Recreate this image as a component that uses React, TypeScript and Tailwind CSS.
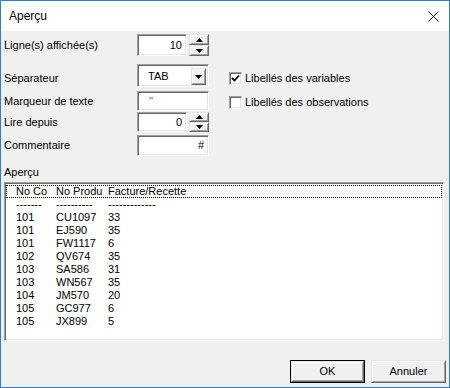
const sunken =
  "bg-white border border-t-[#a0a0a0] border-l-[#a0a0a0] border-r-white border-b-white shadow-[inset_1px_1px_0_#696969,inset_-1px_-1px_0_#e3e3e3]";
const raised =
  "bg-[#f0f0f0] border border-t-[#e3e3e3] border-l-[#e3e3e3] border-r-[#696969] border-b-[#696969] shadow-[inset_1px_1px_0_#ffffff,inset_-1px_-1px_0_#a0a0a0]";

function Arrow({ up }: { up?: boolean }) {
  return (
    <svg width="7" height="4" viewBox="0 0 7 4">
      {up ? <path d="M0 4 L3.5 0 L7 4 Z" fill="#000" /> : <path d="M0 0 L7 0 L3.5 4 Z" fill="#000" />}
    </svg>
  );
}

function Spin({ value, h }: { value: string; h: string }) {
  return (
    <div className={`flex gap-[2px] ${h}`}>
      <div className={`${sunken} w-[50px] h-full flex items-center justify-end pr-[4px]`}>{value}</div>
      <div className="w-[20px] h-full flex flex-col">
        <div className={`${raised} flex-1 flex items-center justify-center`}>
          <Arrow up />
        </div>
        <div className={`${raised} flex-1 flex items-center justify-center`}>
          <Arrow />
        </div>
      </div>
    </div>
  );
}

function Check({ checked, label }: { checked?: boolean; label: string }) {
  return (
    <div className="flex items-center h-[13px] gap-[3px]">
      <div className={`${sunken} w-[13px] h-[13px] flex items-center justify-center`}>
        {checked && (
          <svg width="9" height="9" viewBox="0 0 9 9">
            <path d="M1 4 L3.5 6.5 L8 1.5" stroke="#000" strokeWidth="1.8" fill="none" />
          </svg>
        )}
      </div>
      <span>{label}</span>
    </div>
  );
}

const rows = [
  ["101", "CU1097", "33"],
  ["101", "EJ590", "35"],
  ["101", "FW1117", "6"],
  ["102", "QV674", "35"],
  ["103", "SA586", "31"],
  ["103", "WN567", "35"],
  ["104", "JM570", "20"],
  ["105", "GC977", "6"],
  ["105", "JX899", "5"],
];

export default function App() {
  return (
    <div className="w-[450px] h-[388px] border border-[#2b7fd4] bg-[#f0f0f0] flex flex-col font-['Liberation_Sans',Arial,sans-serif] text-[11px] text-black leading-none overflow-hidden">
      <div className="h-[30px] bg-white flex items-center justify-between pl-[8px] pr-[10px] shrink-0">
        <span className="text-[12px]">Aperçu</span>
        <svg width="11" height="11" viewBox="0 0 11 11">
          <path d="M0.5 0.5 L10.5 10.5 M10.5 0.5 L0.5 10.5" stroke="#111" strokeWidth="1" />
        </svg>
      </div>

      <div className="flex-1 flex flex-col pl-[3px] pr-[5px]">
        <div className="flex gap-[20px]">
          <div className="flex flex-col w-[205px]">
            <div className="flex items-center mt-[3px] h-[22px]">
              <span className="w-[133px]">Ligne(s) affichée(s)</span>
              <Spin value="10" h="h-[22px]" />
            </div>
            <div className="flex mt-[8px] h-[23px]">
              <span className="w-[133px] pt-[9px]">Séparateur</span>
              <div className={`${sunken} w-[72px] h-full flex items-center justify-between pl-[10px] pr-[2px] pt-[2px]`}>
                <span>TAB</span>
                <div className={`${raised} w-[15px] h-[17px] flex items-center justify-center`}>
                  <Arrow />
                </div>
              </div>
            </div>
            <div className="flex items-center mt-[4px] h-[20px]">
              <span className="w-[133px]">Marqueur de texte</span>
              <div className={`${sunken} w-[72px] h-full flex items-center pl-[11px]`}>
                <span className="text-[#2a6fd0]">"</span>
              </div>
            </div>
            <div className="flex items-center mt-[1px] h-[20px]">
              <span className="w-[133px]">Lire depuis</span>
              <Spin value="0" h="h-[20px]" />
            </div>
            <div className="flex items-center mt-[3px] h-[21px]">
              <span className="w-[133px]">Commentaire</span>
              <div className={`${sunken} w-[72px] h-full flex items-center justify-end pr-[4px]`}>#</div>
            </div>
          </div>
          <div className="flex flex-col gap-[11px] pt-[41px]">
            <Check checked label="Libellés des variables" />
            <Check label="Libellés des observations" />
          </div>
        </div>

        <div className="mt-[10px] h-[13px] flex items-center">Aperçu</div>

        <div className={`${sunken} mt-[3px] h-[159px] pt-[2px] px-[1px]`}>
          <div className="h-[13px] flex items-center border border-dotted border-black pl-[9px]">
            <span className="w-[40px] whitespace-nowrap">No Co</span>
            <span className="w-[52px] whitespace-nowrap">No Produ</span>
            <span>Facture/Recette</span>
          </div>
          <div className="h-[13px] flex items-center pl-[10px]">
            <span className="w-[40px]">-------</span>
            <span className="w-[52px]">----------</span>
            <span>-------------</span>
          </div>
          {rows.map((r) => (
            <div key={r[1]} className="h-[13px] flex items-center pl-[10px]">
              <span className="w-[40px]">{r[0]}</span>
              <span className="w-[52px]">{r[1]}</span>
              <span>{r[2]}</span>
            </div>
          ))}
        </div>

        <div className="flex justify-end gap-[6px] mt-[19px]">
          <div className="w-[75px] h-[23px] border border-black">
            <div className={`${raised} w-full h-full flex items-center justify-center`}>OK</div>
          </div>
          <div className={`${raised} w-[75px] h-[23px] flex items-center justify-center mr-[-2px]`}>Annuler</div>
        </div>
      </div>
    </div>
  );
}
